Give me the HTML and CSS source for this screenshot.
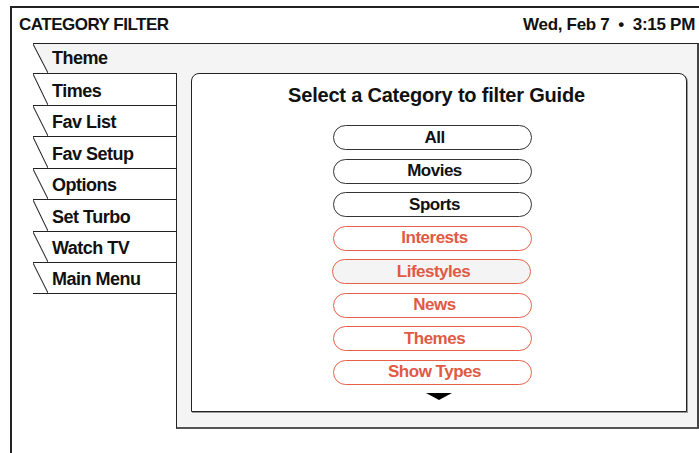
FILE: index.html
```html
<!DOCTYPE html>
<html lang="en">
<head>
    <meta charset="UTF-8">
    <meta name="viewport" content="width=device-width, initial-scale=1.0">
    <title>Category Filter</title>
    <link rel="stylesheet" href="styles.css">
</head>
<body>
    <div class="screen">
        <div class="header">
            <span class="screen-title">CATEGORY FILTER</span>
            <span class="clock">Wed, Feb 7&nbsp; &bull;&nbsp; 3:15 PM</span>
        </div>

        <div class="guide">
            <div class="tab active">Theme</div>

            <div class="guide-body">
                <div class="tab-list">
                    <div class="tab">Times</div>
                    <div class="tab">Fav List</div>
                    <div class="tab">Fav Setup</div>
                    <div class="tab">Options</div>
                    <div class="tab">Set Turbo</div>
                    <div class="tab">Watch TV</div>
                    <div class="tab">Main Menu</div>
                </div>

                <div class="panel">
                    <div class="filter-box">
                        <h1>Select a Category to filter Guide</h1>
                        <div class="category-list">
                            <div class="category">All</div>
                            <div class="category">Movies</div>
                            <div class="category">Sports</div>
                            <div class="category locked">Interests</div>
                            <div class="category locked selected">Lifestyles</div>
                            <div class="category locked">News</div>
                            <div class="category locked">Themes</div>
                            <div class="category locked">Show Types</div>
                        </div>
                        <div class="more-arrow"></div>
                    </div>
                </div>
            </div>
        </div>
    </div>
</body>
</html>
```

FILE: styles.css
```css
html, body {
    margin: 0;
    padding: 0;
    background-color: #fff;
    overflow: hidden;
}

body {
    font-family: 'Liberation Sans', Arial, sans-serif;
    font-weight: bold;
    color: #111;
}

.screen {
    margin: 6px 0 0 10px;
    width: 689px;
    height: 447px;
    box-sizing: border-box;
    border-left: 2px solid #222;
    border-top: 2px solid #222;
}

.header {
    display: flex;
    justify-content: space-between;
    align-items: center;
    height: 35px;
    padding: 0 4px 2px 7px;
    box-sizing: border-box;
    font-size: 17px;
    letter-spacing: -0.5px;
}

.clock {
    letter-spacing: -0.3px;
}

.guide {
    margin-left: 21px;
}

.tab {
    display: flex;
    align-items: center;
    height: 31.5px;
    box-sizing: border-box;
    padding-top: 4px;
    border-top: 1px solid #222;
    background-color: #fff;
    font-size: 18px;
    letter-spacing: -0.5px;
}

.tab::before {
    content: "";
    align-self: stretch;
    width: 15px;
    margin: -4px 4px 0 0;
    background: linear-gradient(to top right, #fff calc(50% - 1px), #222 50%, #fff calc(50% + 1px));
}

.tab.active {
    height: 30px;
    padding-top: 0;
    background-color: #f4f4f4;
    border-right: 2px solid #444;
}

.tab.active::before {
    margin-top: 0;
    background: linear-gradient(to top right, #fff calc(50% - 1px), #222 50%, #f4f4f4 calc(50% + 1px));
}

.guide-body {
    display: flex;
}

.tab-list {
    width: 143px;
}

.tab-list .tab:last-child {
    border-bottom: 1px solid #222;
}

.panel {
    flex: 1;
    height: 356px;
    box-sizing: border-box;
    padding: 0 10px 0 14px;
    background-color: #f4f4f4;
    border-left: 1px solid #222;
    border-right: 2px solid #444;
    border-bottom: 2px solid #555;
}

.filter-box {
    height: 339px;
    box-sizing: border-box;
    padding-top: 11px;
    background-color: #fff;
    border: 1.5px solid #222;
    border-radius: 8px 8px 0 0;
    box-shadow: 1px 1px 0 #999;
    display: flex;
    flex-direction: column;
    align-items: center;
}

h1 {
    margin: 0 5px 19px 0;
    font-size: 20px;
    line-height: 21px;
    letter-spacing: -0.2px;
}

.category-list {
    display: flex;
    flex-direction: column;
    gap: 8.5px;
    margin-right: 14px;
}

.category {
    width: 199px;
    height: 25px;
    box-sizing: border-box;
    padding-left: 5px;
    border: 1px solid #333;
    border-radius: 13px;
    display: flex;
    align-items: center;
    justify-content: center;
    font-size: 17px;
    letter-spacing: -0.5px;
}

.category.locked {
    color: #e05a44;
    border-color: #e8604a;
}

.category.selected {
    background-color: #f4f4f4;
    margin-left: -1px;
}

.more-arrow {
    margin-top: 8px;
    width: 0;
    height: 0;
    border-left: 13px solid transparent;
    border-right: 13px solid transparent;
    border-top: 7px solid #000;
}
```
